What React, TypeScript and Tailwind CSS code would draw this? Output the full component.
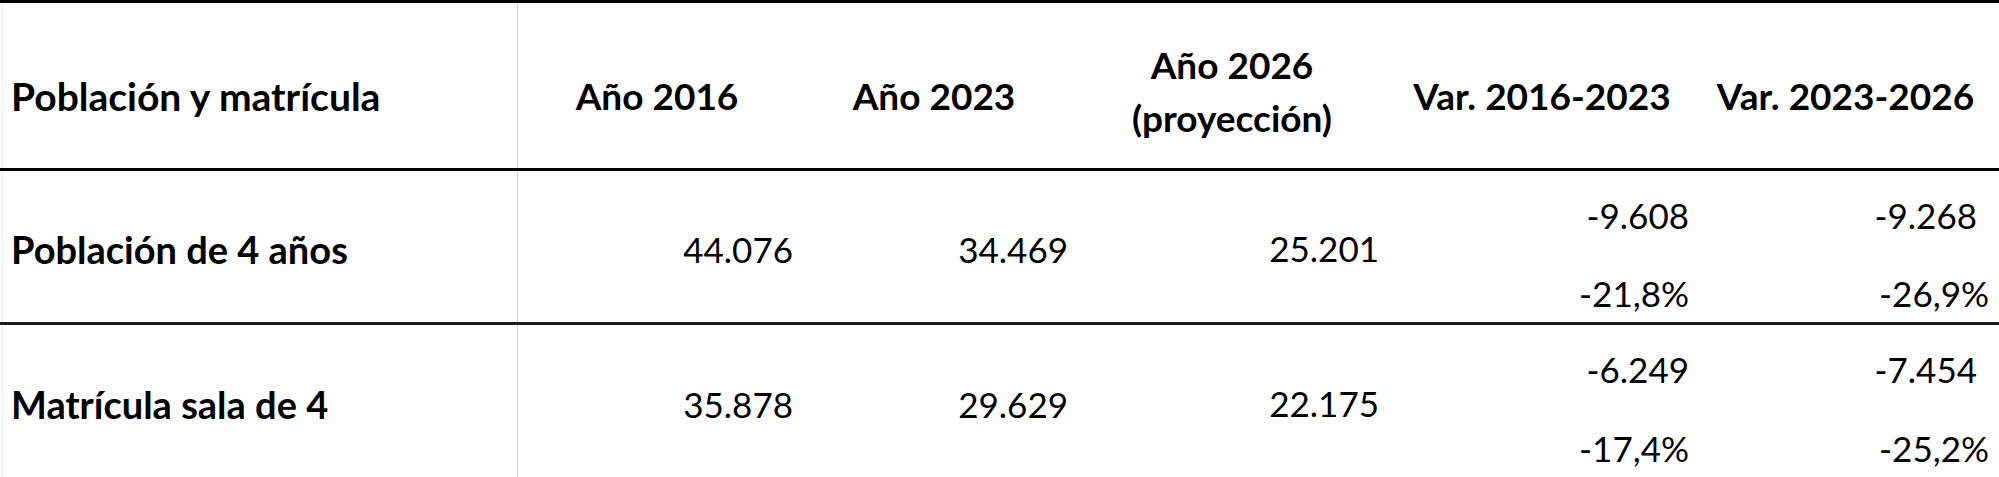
import React from "react";

type Row = {
  label: string;
  a: string;
  b: string;
  c: string;
  v1: [string, string];
  v2: [string, string];
  h: string;
};

const rows: Row[] = [
  { label: "Población de 4 años", a: "44.076", b: "34.469", c: "25.201", v1: ["-9.608", "-21,8%"], v2: ["-9.268", "-26,9%"], h: "h-[151px]" },
  { label: "Matrícula sala de 4", a: "35.878", b: "29.629", c: "22.175", v1: ["-6.249", "-17,4%"], v2: ["-7.454", "-25,2%"], h: "h-[152px]" },
];

function DataRow({ r }: { r: Row }) {
  return (
    <div className={`grid grid-cols-[518px_278px_276px_320px_300px_307px] ${r.h}`}>
      <div className="flex h-full">
        <div className="ml-[2px] border-l border-[#eeeeee] h-full" />
        <div className="flex-1 flex items-center pl-[8px] pt-[5px] border-r border-[#d6d6d6] font-bold text-[38px] leading-[46px] whitespace-nowrap">
          {r.label}
        </div>
      </div>
      <div className="flex items-center justify-end pr-[3px] pt-[5px] text-[35px] leading-[46px]">{r.a}</div>
      <div className="flex items-center justify-end pr-[4px] pt-[5px] text-[35px] leading-[46px]">{r.b}</div>
      <div className="flex items-center justify-end pr-[13px] pt-[3px] text-[35px] leading-[46px]">{r.c}</div>
      <div className="flex flex-col justify-between items-end pr-[3px] pt-[21px] pb-[6px] text-[35px] leading-[46px]">
        <span>{r.v1[0]}</span>
        <span>{r.v1[1]}</span>
      </div>
      <div className="flex flex-col justify-between items-end pt-[21px] pb-[6px] text-[35px] leading-[46px]">
        <span className="pr-[22px]">{r.v2[0]}</span>
        <span className="pr-[10px]">{r.v2[1]}</span>
      </div>
    </div>
  );
}

export default function App() {
  return (
    <div className="w-[1999px] h-[477px] bg-white overflow-hidden text-black font-['Lato','Liberation_Sans',sans-serif]">
      <div className="h-[3px] bg-black" />
      <div className="grid grid-cols-[518px_278px_276px_320px_300px_307px] h-[165px] font-bold text-[37px] leading-[54px] whitespace-nowrap">
        <div className="flex h-full">
          <div className="ml-[2px] border-l border-[#eeeeee] h-full" />
          <div className="flex-1 flex items-center pl-[8px] pt-[20px] border-r border-[#d6d6d6] text-[39px]">
            Población y matrícula
          </div>
        </div>
        <div className="flex items-center justify-center text-center pt-[20px]">Año 2016</div>
        <div className="flex items-center justify-center text-center pt-[20px]">Año 2023</div>
        <div className="flex flex-col items-center justify-center text-center pt-[10px] leading-[53px]">
          <span>Año 2026</span>
          <span>(proyección)</span>
        </div>
        <div className="flex items-center justify-center text-center pt-[20px]">Var. 2016-2023</div>
        <div className="flex items-center justify-center text-center pt-[20px]">Var. 2023-2026</div>
      </div>
      <div className="h-[3px] bg-black" />
      <DataRow r={rows[0]} />
      <div className="h-[3px] bg-[#1c1c1c]" />
      <DataRow r={rows[1]} />
    </div>
  );
}
